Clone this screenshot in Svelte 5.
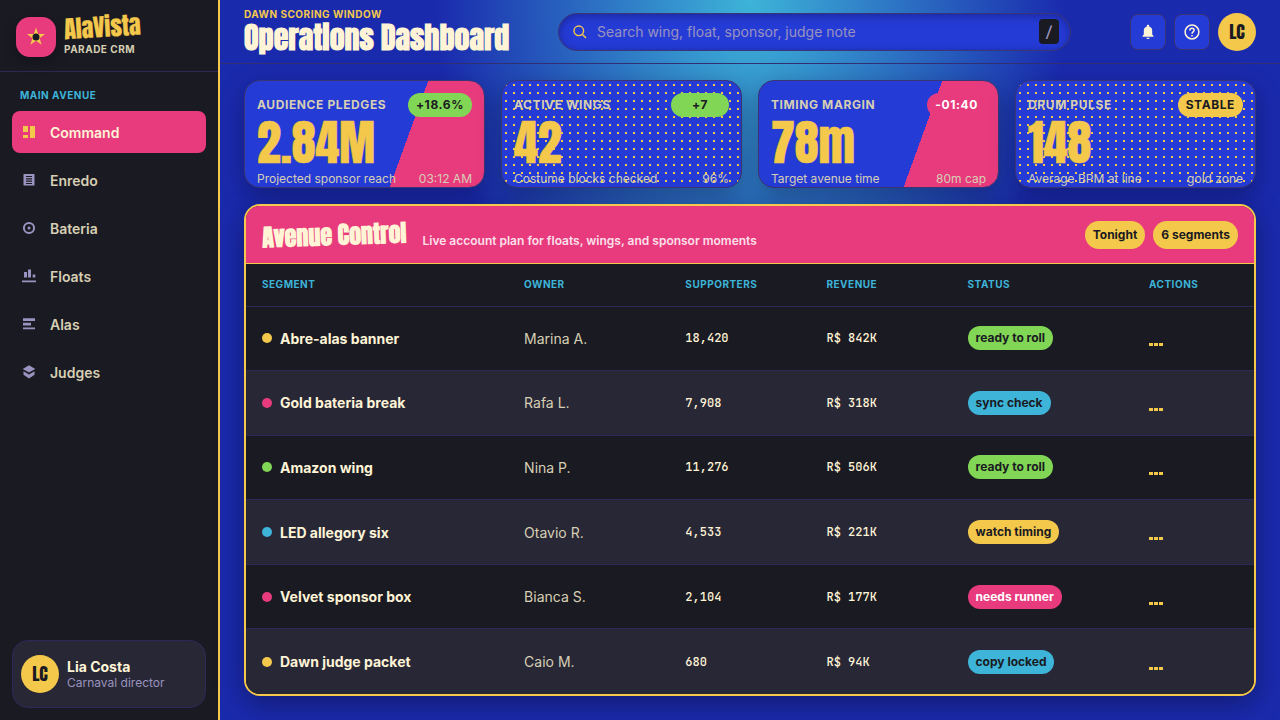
<script>
    const navItems = [
        { id: 'command', label: 'Command' },
        { id: 'enredo', label: 'Enredo' },
        { id: 'bateria', label: 'Bateria' },
        { id: 'floats', label: 'Floats' },
        { id: 'alas', label: 'Alas' },
        { id: 'judges', label: 'Judges' }
    ];

    const stats = [
        { label: 'Audience pledges', value: '2.84M', delta: '+18.6%', tone: 'green', note: 'Projected sponsor reach', side: '03:12 AM', look: 'slash' },
        { label: 'Active wings', value: '42', delta: '+7', tone: 'green', note: 'Costume blocks checked', side: '96%', look: 'dots' },
        { label: 'Timing margin', value: '78m', delta: '-01:40', tone: 'pink', note: 'Target avenue time', side: '80m cap', look: 'slash' },
        { label: 'Drum pulse', value: '148', delta: 'STABLE', tone: 'gold', note: 'Average BPM at line', side: 'gold zone', look: 'dots' }
    ];

    const columns = ['Segment', 'Owner', 'Supporters', 'Revenue', 'Status', 'Actions'];

    const rows = [
        { dot: 'gold', name: 'Abre-alas banner', owner: 'Marina A.', supporters: '18,420', revenue: 'R$ 842K', status: 'ready to roll', tone: 'green' },
        { dot: 'pink', name: 'Gold bateria break', owner: 'Rafa L.', supporters: '7,908', revenue: 'R$ 318K', status: 'sync check', tone: 'cyan' },
        { dot: 'green', name: 'Amazon wing', owner: 'Nina P.', supporters: '11,276', revenue: 'R$ 506K', status: 'ready to roll', tone: 'green' },
        { dot: 'cyan', name: 'LED allegory six', owner: 'Otavio R.', supporters: '4,533', revenue: 'R$ 221K', status: 'watch timing', tone: 'gold' },
        { dot: 'pink', name: 'Velvet sponsor box', owner: 'Bianca S.', supporters: '2,104', revenue: 'R$ 177K', status: 'needs runner', tone: 'pink' },
        { dot: 'gold', name: 'Dawn judge packet', owner: 'Caio M.', supporters: '680', revenue: 'R$ 94K', status: 'copy locked', tone: 'cyan' }
    ];

    let active = $state('command');
</script>

{#snippet icon(id)}
    <svg class="nav-icon" width="14" height="14" viewBox="0 0 14 14" fill="currentColor">
        {#if id === 'command'}
            <path d="M1 1h5v6H1zM1 10h5v3H1zM8 1h5v12H8z" />
        {:else if id === 'enredo'}
            <path fill-rule="evenodd" d="M1.500 1h11v11.500h-11zM4 3v1.100h6V3zM4 5.300v1.100h6V5.300zM4 7.600v1.100h6V7.600zM4 9.900v1.100h6V9.900z" />
        {:else if id === 'bateria'}
            <circle cx="7" cy="7" r="5.1" fill="none" stroke="currentColor" stroke-width="2" />
            <circle cx="7" cy="7" r="1.5" />
        {:else if id === 'floats'}
            <path d="M2 3h3v5.500H2zM6 .5h3v8H6zM10.700 5.500h2.600v3h-2.600zM0 11.500h14v1.700H0z" />
        {:else if id === 'alas'}
            <path d="M1 1.200h12v2.800H1zM1 5.700h8v2.800H1zM1 10.400h12v1.800H1z" />
        {:else}
            <path d="M7 .2l6.300 3.700L7 7.400.7 3.900zM1.500 6.200L7 9.400l5.500-3.200V9.700L7 13.400 1.500 9.700z" />
        {/if}
    </svg>
{/snippet}

<div class="shell">
    <aside class="sidebar">
        <div class="brand">
            <div class="brand-mark">
                <svg width="20" height="20" viewBox="0 0 20 20">
                    <path fill="#f4c84b" d="M10 .5l2.200 6.500 6.800.1-5.400 4.100 2 6.500L10 13.800l-5.600 3.900 2-6.500L1 7.100l6.800-.1z" />
                    <circle cx="10" cy="10" r="3.500" fill="#1a1a22" />
                </svg>
            </div>
            <div class="brand-copy">
                <div class="brand-name poster">AlaVista</div>
                <div class="brand-sub">PARADE CRM</div>
            </div>
        </div>

        <nav class="nav">
            <div class="nav-title">MAIN AVENUE</div>
            {#each navItems as item}
                <button class="nav-item" class:active={active === item.id} onclick={() => (active = item.id)}>
                    {@render icon(item.id)}
                    <span>{item.label}</span>
                </button>
            {/each}
        </nav>

        <div class="user">
            <div class="avatar poster">LC</div>
            <div>
                <div class="user-name">Lia Costa</div>
                <div class="user-role">Carnaval director</div>
            </div>
        </div>
    </aside>

    <main class="main">
        <header class="topbar">
            <div class="heading">
                <div class="eyebrow">DAWN SCORING WINDOW</div>
                <h1 class="poster">Operations Dashboard</h1>
            </div>
            <label class="search">
                <svg width="14" height="14" viewBox="0 0 14 14" fill="none" stroke="#f4c84b" stroke-width="1.400">
                    <circle cx="5.800" cy="5.800" r="4.800" />
                    <path d="M9.500 9.500l3.500 3.500" />
                </svg>
                <input type="text" placeholder="Search wing, float, sponsor, judge note" />
                <kbd>/</kbd>
            </label>
            <div class="tools">
                <button class="tool" aria-label="Notifications">
                    <svg width="16" height="16" viewBox="0 0 16 16" fill="#fff4d6">
                        <path d="M8 .8c.8 0 1.200.5 1.200 1.200v.5c2 .6 3 2.200 3 4.300v3.700l1.300 1.500v.7h-11V12l1.300-1.500V6.800c0-2.100 1-3.700 3-4.300V2C6.800 1.300 7.200.8 8 .8zM6.300 13.800h3.400c-.2.800-.8 1.300-1.700 1.300s-1.500-.5-1.700-1.300z" />
                    </svg>
                </button>
                <button class="tool" aria-label="Help">
                    <svg width="16" height="16" viewBox="0 0 16 16" fill="none" stroke="#fff4d6" stroke-width="1.500">
                        <circle cx="8" cy="8" r="6.900" />
                        <path d="M5.900 6.400c0-1.300.9-2.100 2.100-2.100s2.100.8 2.100 1.900c0 1.600-2.100 1.700-2.100 3.500M8 10.900v1.500" />
                    </svg>
                </button>
                <div class="avatar poster">LC</div>
            </div>
        </header>

        <div class="content">
            <section class="stats">
                {#each stats as stat}
                    <article class="stat {stat.look}">
                        <div class="stat-top">
                            <span class="stat-label">{stat.label}</span>
                            <span class="delta {stat.tone}">{stat.delta}</span>
                        </div>
                        <div class="stat-value poster">{stat.value}</div>
                        <div class="stat-foot">
                            <span>{stat.note}</span>
                            <span>{stat.side}</span>
                        </div>
                    </article>
                {/each}
            </section>

            <section class="panel">
                <div class="panel-head">
                    <h2 class="poster">Avenue Control</h2>
                    <p>Live account plan for floats, wings, and sponsor moments</p>
                    <div class="tags">
                        <span class="tag">Tonight</span>
                        <span class="tag">6 segments</span>
                    </div>
                </div>
                <div class="table">
                    <div class="row head">
                        {#each columns as column}
                            <div>{column}</div>
                        {/each}
                    </div>
                    {#each rows as row}
                        <div class="row">
                            <div class="segment"><i class="dot {row.dot}"></i>{row.name}</div>
                            <div class="owner">{row.owner}</div>
                            <div class="mono">{row.supporters}</div>
                            <div class="mono">{row.revenue}</div>
                            <div><span class="pill {row.tone}">{row.status}</span></div>
                            <div class="more"><i></i><i></i><i></i></div>
                        </div>
                    {/each}
                </div>
            </section>
        </div>
    </main>
</div>

<style>
    :global(body) {
        margin: 0;
        overflow: hidden;
        font-family: Inter, 'Liberation Sans', sans-serif;
    }

    .shell {
        display: flex;
        width: 100vw;
        height: 100vh;
        color: #fff4d6;
        font-size: 14px;
    }

    .shell, .shell * {
        box-sizing: border-box;
    }

    button {
        font-family: inherit;
        border: none;
        cursor: pointer;
    }

    /* condensed poster lettering */
    .poster {
        font-family: Anton, Impact, Roboto, sans-serif;
        line-height: 1;
        white-space: nowrap;
    }

    .green { background: #82d655; }
    .pink { background: #e83b7e; }
    .gold { background: #f4c84b; }
    .cyan { background: #3db4d8; }

    /* sidebar */
    .sidebar {
        display: flex;
        flex-direction: column;
        width: 220px;
        flex: none;
        background: #1a1a22;
        border-right: 2px solid #f4c84b;
    }

    .brand {
        display: flex;
        align-items: center;
        gap: 8px;
        height: 72px;
        padding: 2px 16px 0;
        border-bottom: 1px solid #2e2858;
    }

    .brand-mark {
        display: grid;
        place-items: center;
        width: 40px;
        height: 40px;
        border-radius: 14px;
        background: #e83b7e;
        box-shadow: 0 4px 14px rgba(0, 0, 0, 0.3);
    }

    .brand-name {
        width: 77px;
        color: #f4c84b;
        font-size: 24px;
        -webkit-text-stroke: 0.3px;
        transform: rotate(-3.5deg);
    }

    .brand-sub {
        margin-top: 3px;
        padding-bottom: 2px;
        color: #d6cfb4;
        font-size: 10px;
        font-weight: 700;
        line-height: 14px;
        letter-spacing: 0.05em;
    }

    .nav {
        display: flex;
        flex-direction: column;
        gap: 6px;
        flex: 1;
        padding: 15px 12px;
    }

    .nav-title {
        padding: 0 8px 1px;
        color: #3db4d8;
        font-size: 10px;
        font-weight: 700;
        line-height: 17px;
        letter-spacing: 0.05em;
    }

    .nav-item {
        display: flex;
        align-items: center;
        gap: 14px;
        height: 42px;
        padding: 0 10px;
        border-radius: 8px;
        background: none;
        color: #d6cfb4;
        font-size: 14px;
        font-weight: 600;
    }

    .nav-item.active {
        background: #e83b7e;
        color: #fff4d6;
    }

    .nav-icon {
        color: #9a93bf;
    }

    .active .nav-icon {
        color: #f4c84b;
    }

    .user {
        display: flex;
        align-items: center;
        gap: 8px;
        height: 68px;
        margin: 12px;
        padding: 0 8px;
        border: 1px solid #2e2858;
        border-radius: 16px;
        background: #282736;
    }

    .avatar {
        display: grid;
        place-items: center;
        width: 38px;
        height: 38px;
        border-radius: 50%;
        background: #f4c84b;
        color: #1a1a22;
        font-size: 18px;
    }

    .user-name {
        font-weight: 700;
        line-height: 17px;
    }

    .user-role {
        color: #9a93bf;
        font-size: 12px;
        line-height: 15px;
    }

    /* main area */
    .main {
        display: flex;
        flex-direction: column;
        flex: 1;
        min-width: 0;
        background: radial-gradient(ellipse at 50% 0, #3db4d8 0, transparent 42%), #1a2aad;
    }

    .topbar {
        display: flex;
        align-items: center;
        height: 64px;
        padding: 0 24px;
        border-bottom: 1px solid #322f72;
    }

    .heading {
        width: 314px;
    }

    .eyebrow {
        color: #f4c84b;
        font-size: 10px;
        font-weight: 700;
        line-height: 14px;
        letter-spacing: 0.05em;
    }

    h1, h2, p {
        margin: 0;
    }

    h1 {
        margin-top: 2px;
        padding-bottom: 3px;
        font-size: 30px;
        font-weight: 700;
    }

    .search {
        display: flex;
        align-items: center;
        gap: 10px;
        width: 513px;
        height: 38px;
        padding: 0 11px 0 14px;
        border: 1px solid #3a3575;
        border-radius: 19px;
        background: #253bd6;
        box-shadow: inset 0 2px 8px rgba(10, 10, 60, 0.4);
    }

    .search input {
        flex: 1;
        min-width: 0;
        padding: 0;
        border: none;
        outline: none;
        background: none;
        color: #fff4d6;
        font: 400 14px Inter, sans-serif;
    }

    .search input::placeholder {
        color: #9a93bf;
        opacity: 1;
    }

    kbd {
        display: grid;
        place-items: center;
        width: 20px;
        height: 25px;
        border-radius: 4px;
        background: #1a1a22;
        color: #9a93bf;
        font: 500 14px 'JetBrains Mono', 'DejaVu Sans Mono', monospace;
    }

    .tools {
        display: flex;
        align-items: center;
        gap: 8px;
        margin-left: auto;
    }

    .tool {
        display: grid;
        place-items: center;
        width: 36px;
        height: 36px;
        padding: 0;
        border: 1px solid #3a3575;
        border-radius: 8px;
        background: #253bd6;
    }

    .content {
        display: flex;
        flex-direction: column;
        gap: 16px;
        flex: 1;
        min-height: 0;
        padding: 16px 24px 24px;
    }

    .stats {
        display: grid;
        grid-template-columns: repeat(4, 1fr);
        gap: 16px;
    }

    .stat {
        height: 108px;
        padding: 12px;
        overflow: hidden;
        border: 1px solid #3a3575;
        border-radius: 16px;
        background-color: #253bd6;
        box-shadow: 0 8px 24px rgba(10, 10, 40, 0.35);
    }

    .slash {
        background-image: linear-gradient(110deg, transparent 66%, #e83b7e 66%);
    }

    .dots {
        background-image: radial-gradient(circle, #f4c84b 1px, transparent 1.5px);
        background-size: 8px 8px;
    }

    .stat-top, .stat-foot {
        display: flex;
        align-items: center;
        justify-content: space-between;
        color: #d6cfb4;
        font-size: 12px;
    }

    .stat-label {
        padding-bottom: 2px;
        font-weight: 700;
        letter-spacing: 0.05em;
        text-transform: uppercase;
    }

    .delta {
        min-width: 58px;
        padding: 0 8px;
        border-radius: 12px;
        color: #1a1a22;
        font-weight: 700;
        line-height: 24px;
        letter-spacing: 0.05em;
        text-align: center;
    }

    .delta.pink, .pill.pink {
        color: #fff;
    }

    .stat-value {
        margin: 2px 0 4px;
        color: #f4c84b;
        font-size: 48px;
        -webkit-text-stroke: 0.6px;
    }

    .stat-foot {
        line-height: 15px;
    }

    .panel {
        display: flex;
        flex-direction: column;
        flex: 1;
        overflow: hidden;
        border: 2px solid #f4c84b;
        border-radius: 16px;
        background: #1a1a22;
        box-shadow: 0 8px 28px rgba(10, 10, 40, 0.45);
    }

    .panel-head {
        display: flex;
        align-items: center;
        height: 58px;
        flex: none;
        padding: 0 16px;
        border-bottom: 1px solid #f4c84b;
        background: #e83b7e;
    }

    h2 {
        font-size: 24px;
        font-weight: 700;
        transform: rotate(-2deg);
    }

    .panel-head p {
        margin: 12px 0 0 16px;
        color: rgba(255, 255, 255, 0.86);
        font-size: 12px;
        font-weight: 600;
    }

    .tags {
        display: flex;
        gap: 8px;
        margin-left: auto;
    }

    .tag {
        padding: 0 8px;
        border-radius: 14px;
        background: #f4c84b;
        color: #1a1a22;
        font-size: 12px;
        font-weight: 700;
        line-height: 28px;
    }

    .table {
        display: grid;
        grid-template-rows: 42.5px repeat(6, 1fr);
        flex: 1;
    }

    .row {
        display: grid;
        grid-template-columns: 26% 16% 14% 14% 18% 12%;
        align-items: center;
        border-bottom: 1px solid #2e2858;
    }

    .row:last-child {
        border-bottom: none;
    }

    .row:nth-child(odd):not(.head) {
        background: #282736;
    }

    .row > div {
        padding: 0 16px;
    }

    .row.head > div {
        padding-bottom: 2px;
    }

    .head {
        color: #3db4d8;
        font-size: 10px;
        font-weight: 700;
        letter-spacing: 0.05em;
        text-transform: uppercase;
    }

    .segment {
        display: flex;
        align-items: center;
        gap: 8px;
        font-weight: 700;
    }

    .dot {
        width: 10px;
        height: 10px;
        border-radius: 50%;
    }

    .owner {
        color: #d6cfb4;
    }

    .mono {
        font-family: 'JetBrains Mono', 'DejaVu Sans Mono', monospace;
        font-size: 12px;
        font-weight: 500;
    }

    .pill {
        display: inline-block;
        padding: 0 8px;
        border-radius: 12px;
        color: #1a1a22;
        font-size: 12px;
        font-weight: 700;
        line-height: 24px;
    }

    .more {
        display: flex;
        gap: 0.5px;
        margin-top: 13px;
    }

    .more i {
        width: 4.3px;
        height: 3px;
        background: #f4c84b;
    }
</style>
